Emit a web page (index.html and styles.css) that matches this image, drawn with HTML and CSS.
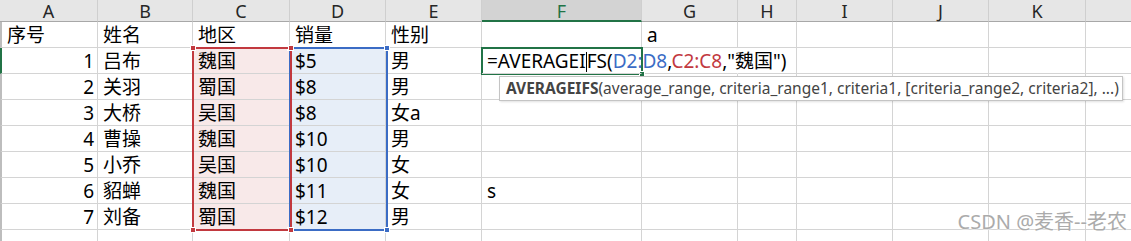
FILE: index.html
```html
<!DOCTYPE html>
<html lang="zh-CN">
<head>
  <meta charset="UTF-8" />
  <title>AVERAGEIFS</title>
  <link rel="stylesheet" href="styles.css">
</head>
<body>
  <div class="sheet">
    <div class="grid">
      <!-- column headers -->
      <div class="hd">A</div><div class="hd">B</div><div class="hd">C</div><div class="hd">D</div>
      <div class="hd">E</div><div class="hd hd-on">F</div><div class="hd">G</div><div class="hd">H</div>
      <div class="hd">I</div><div class="hd">J</div><div class="hd">K</div><div class="hd"></div>

      <div class="c first">序号</div><div class="c">姓名</div><div class="c">地区</div><div class="c">销量</div>
      <div class="c">性别</div><div class="c"></div><div class="c">a</div><div class="c"></div>
      <div class="c"></div><div class="c"></div><div class="c"></div><div class="c"></div>

      <div class="c first sel num">1</div><div class="c">吕布</div><div class="c red">魏国</div><div class="c blue">$5</div>
      <div class="c">男</div><div class="c formula">=AVERAGEI<span class="caret"></span>FS(<span class="ref-d">D2:D8</span>,<span class="ref-c">C2:C8</span>,"魏国")</div><div class="c no-line"></div><div class="c"></div>
      <div class="c"></div><div class="c"></div><div class="c"></div><div class="c"></div>

      <div class="c first num">2</div><div class="c">关羽</div><div class="c red">蜀国</div><div class="c blue">$8</div>
      <div class="c">男</div><div class="c"></div><div class="c"></div><div class="c"></div>
      <div class="c"></div><div class="c"></div><div class="c"></div><div class="c"></div>

      <div class="c first num">3</div><div class="c">大桥</div><div class="c red">吴国</div><div class="c blue">$8</div>
      <div class="c">女a</div><div class="c"></div><div class="c"></div><div class="c"></div>
      <div class="c"></div><div class="c"></div><div class="c"></div><div class="c"></div>

      <div class="c first num">4</div><div class="c">曹操</div><div class="c red">魏国</div><div class="c blue">$10</div>
      <div class="c">男</div><div class="c"></div><div class="c"></div><div class="c"></div>
      <div class="c"></div><div class="c"></div><div class="c"></div><div class="c"></div>

      <div class="c first num">5</div><div class="c">小乔</div><div class="c red">吴国</div><div class="c blue">$10</div>
      <div class="c">女</div><div class="c"></div><div class="c"></div><div class="c"></div>
      <div class="c"></div><div class="c"></div><div class="c"></div><div class="c"></div>

      <div class="c first num">6</div><div class="c">貂蝉</div><div class="c red">魏国</div><div class="c blue">$11</div>
      <div class="c">女</div><div class="c">s</div><div class="c"></div><div class="c"></div>
      <div class="c"></div><div class="c"></div><div class="c"></div><div class="c"></div>

      <div class="c first num">7</div><div class="c">刘备</div><div class="c red">蜀国</div><div class="c blue">$12</div>
      <div class="c">男</div><div class="c"></div><div class="c"></div><div class="c"></div>
      <div class="c"></div><div class="c"></div><div class="c"></div><div class="c"></div>

      <div class="c first"></div><div class="c"></div><div class="c"></div><div class="c"></div>
      <div class="c"></div><div class="c"></div><div class="c"></div><div class="c"></div>
      <div class="c"></div><div class="c"></div><div class="c"></div><div class="c"></div>
    </div>

    <!-- range highlights -->
    <div class="range range-d"><i class="h tl"></i><i class="h tr"></i><i class="h bl"></i><i class="h br"></i></div>
    <div class="range range-c"><i class="h tl"></i><i class="h tr"></i><i class="h bl"></i><i class="h br"></i></div>
    <div class="active"><i class="fill"></i></div>

    <div class="tip"><b>AVERAGEIFS</b>(average_range, criteria_range1, criteria1, [criteria_range2, criteria2], ...)</div>

    <div class="mark">CSDN @麦香--老农</div>
  </div>
</body>
</html>
```

FILE: styles.css
```css
* { box-sizing: border-box; margin: 0; padding: 0; }
body {
  background: #fff;
  font-family: "Noto Sans", "Noto Sans CJK SC", sans-serif;
  color: #000;
  overflow: hidden;
}
.sheet {
  position: relative;
  width: 1131px;
  height: 241px;
  overflow: hidden;
}
.grid {
  display: grid;
  grid-template-columns: 98px 95px 97px 96px 96px 160px 96px 59px 96px 96px 97px 60px;
  grid-template-rows: 22px repeat(9, 26px);
}

/* column headers */
.hd {
  background: #e6e6e6;
  border-right: 1px solid #cfcfcf;
  border-bottom: 1px solid #a8a8a8;
  font-size: 18px;
  line-height: 22px;
  text-align: center;
  color: #262626;
}
.hd-on {
  background: #d3d3d3;
  color: #217346;
  border-bottom: 2px solid #217346;
}

/* cells */
.c {
  border-right: 1px solid #d4d4d4;
  border-bottom: 1px solid #d4d4d4;
  font-size: 19px;
  line-height: 26px;
  padding-left: 5px;
  white-space: nowrap;
}
.first { border-left: 2px solid #bdbdbd; }
.first.sel { border-left-color: #217346; }
.num { text-align: right; padding-right: 3px; }
.red { background: #f8e9e9; }
.blue { background: #e7eef8; }
.no-line { border-right-color: transparent; }

.formula {
  position: relative;
  z-index: 2;
  overflow: visible;
  border-right-color: transparent;
}
.caret {
  display: inline-block;
  width: 1px;
  height: 20px;
  background: #000;
  vertical-align: -4px;
}
.ref-d { color: #3b6cc5; }
.ref-c { color: #c2393f; }

/* range outlines */
.range {
  position: absolute;
  top: 47px;
  height: 184px;
  border: 2px solid;
}
.range-c { left: 192px; width: 100px; border-color: #c2393f; }
.range-d { left: 289px; width: 99px; border-color: #3b6cc5; }
.h {
  position: absolute;
  width: 6px;
  height: 6px;
  border: 1px solid #fff;
}
.range-c .h { background: #c2393f; }
.range-d .h { background: #3b6cc5; }
.tl { left: -4px; top: -4px; }
.tr { right: -4px; top: -4px; }
.bl { left: -4px; bottom: -4px; }
.br { right: -4px; bottom: -4px; }

.active {
  position: absolute;
  left: 481px;
  top: 47px;
  width: 162px;
  height: 28px;
  border: 2px solid #217346;
}
.fill {
  position: absolute;
  right: -4px;
  bottom: -4px;
  width: 6px;
  height: 6px;
  background: #217346;
  border: 1px solid #fff;
}

/* function tooltip */
.tip {
  position: absolute;
  left: 499px;
  top: 76px;
  width: 624px;
  height: 25px;
  background: #fff;
  border: 1px solid #c4c4c4;
  box-shadow: 1px 1px 2px rgba(0,0,0,0.12);
  padding-left: 6px;
  font-size: 15.5px;
  line-height: 23px;
  color: #444;
  white-space: nowrap;
  z-index: 3;
}
.tip b { font-weight: bold; color: #444; }

.mark {
  position: absolute;
  right: 4px;
  bottom: 6px;
  font-size: 20px;
  line-height: 26px;
  color: #ababab;
  text-shadow: 0 0 2px #fff, 0 0 2px #fff;
  z-index: 4;
}
```
